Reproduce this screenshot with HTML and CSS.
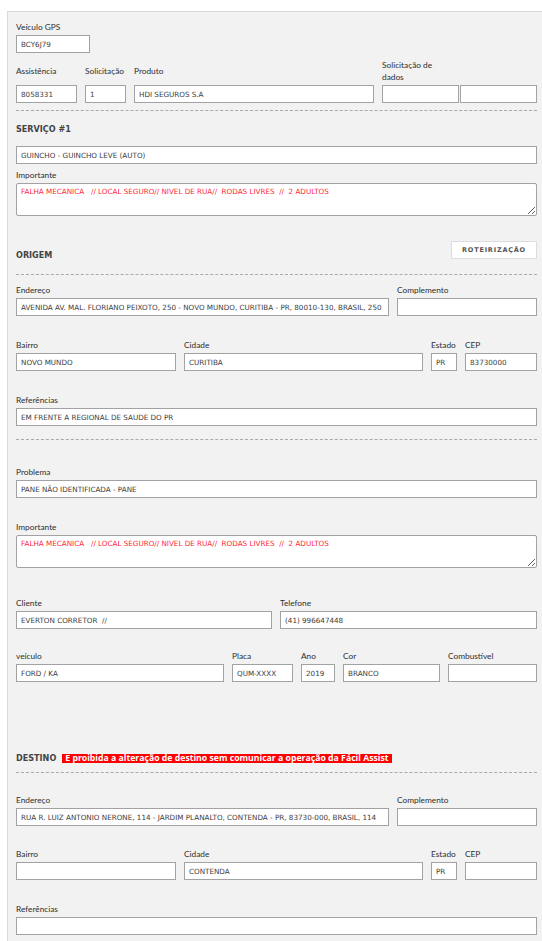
FILE: index.html
```html
<!DOCTYPE html>
<html lang="pt-BR">
<head>
    <meta charset="UTF-8">
    <meta name="viewport" content="width=device-width, initial-scale=1.0">
    <title>Atendimento</title>
    <link rel="stylesheet" href="styles.css">
</head>
<body>
    <div class="panel">
        <div class="row row-gps">
            <div class="field">
                <label>Veículo GPS</label>
                <input type="text" value="BCY6J79">
            </div>
        </div>

        <div class="row row-ids">
            <div class="field">
                <label>Assistência</label>
                <input type="text" value="8058331">
            </div>
            <div class="field">
                <label>Solicitação</label>
                <input type="text" value="1">
            </div>
            <div class="field">
                <label>Produto</label>
                <input type="text" value="HDI SEGUROS S.A">
            </div>
            <div class="field">
                <label class="wrap">Solicitação de dados</label>
                <div class="pair">
                    <input type="text" value="">
                    <input type="text" value="">
                </div>
            </div>
        </div>

        <div class="divider"></div>

        <h3 class="section-title">SERVIÇO #1</h3>
        <input type="text" class="full servico" value="GUINCHO - GUINCHO LEVE (AUTO)">

        <div class="row row-importante">
            <div class="field">
                <label>Importante</label>
                <textarea class="alert-text">FALHA MECANICA   // LOCAL SEGURO// NIVEL DE RUA//  RODAS LIVRES  //  2 ADULTOS</textarea>
            </div>
        </div>

        <div class="section-head origem-head">
            <h3 class="section-title">ORIGEM</h3>
            <button class="btn-route">ROTEIRIZAÇÃO</button>
        </div>

        <div class="divider divider-origem"></div>

        <div class="row row-endereco first">
            <div class="field">
                <label>Endereço</label>
                <input type="text" value="AVENIDA AV. MAL. FLORIANO PEIXOTO, 250 - NOVO MUNDO, CURITIBA - PR, 80010-130, BRASIL, 250">
            </div>
            <div class="field">
                <label>Complemento</label>
                <input type="text" value="">
            </div>
        </div>

        <div class="row row-bairro">
            <div class="field">
                <label>Bairro</label>
                <input type="text" value="NOVO MUNDO">
            </div>
            <div class="field">
                <label>Cidade</label>
                <input type="text" value="CURITIBA">
            </div>
            <div class="field">
                <label>Estado</label>
                <input type="text" value="PR">
            </div>
            <div class="field">
                <label>CEP</label>
                <input type="text" value="83730000">
            </div>
        </div>

        <div class="row">
            <div class="field">
                <label>Referências</label>
                <input type="text" value="EM FRENTE A REGIONAL DE SAUDE DO PR">
            </div>
        </div>

        <div class="divider divider-problema"></div>

        <div class="row row-problema">
            <div class="field">
                <label>Problema</label>
                <input type="text" value="PANE NÃO IDENTIFICADA - PANE">
            </div>
        </div>

        <div class="row">
            <div class="field">
                <label>Importante</label>
                <textarea class="alert-text">FALHA MECANICA   // LOCAL SEGURO// NIVEL DE RUA//  RODAS LIVRES  //  2 ADULTOS</textarea>
            </div>
        </div>

        <div class="row row-cliente">
            <div class="field">
                <label>Cliente</label>
                <input type="text" value="EVERTON CORRETOR  //">
            </div>
            <div class="field">
                <label>Telefone</label>
                <input type="text" value="(41) 996647448">
            </div>
        </div>

        <div class="row row-veiculo">
            <div class="field">
                <label>veículo</label>
                <input type="text" value="FORD / KA">
            </div>
            <div class="field">
                <label>Placa</label>
                <input type="text" value="QUM-XXXX">
            </div>
            <div class="field">
                <label>Ano</label>
                <input type="text" value="2019">
            </div>
            <div class="field">
                <label>Cor</label>
                <input type="text" value="BRANCO">
            </div>
            <div class="field">
                <label>Combustível</label>
                <input type="text" value="">
            </div>
        </div>

        <div class="section-head destino-head">
            <h3 class="section-title">DESTINO</h3>
            <span class="warning">É proibida a alteração de destino sem comunicar a operação da Fácil Assist</span>
        </div>

        <div class="divider divider-destino"></div>

        <div class="row row-endereco destino-first">
            <div class="field">
                <label>Endereço</label>
                <input type="text" value="RUA R. LUIZ ANTONIO NERONE, 114 - JARDIM PLANALTO, CONTENDA - PR, 83730-000, BRASIL, 114">
            </div>
            <div class="field">
                <label>Complemento</label>
                <input type="text" value="">
            </div>
        </div>

        <div class="row row-bairro destino-bairro">
            <div class="field">
                <label>Bairro</label>
                <input type="text" value="">
            </div>
            <div class="field">
                <label>Cidade</label>
                <input type="text" value="CONTENDA">
            </div>
            <div class="field">
                <label>Estado</label>
                <input type="text" value="PR">
            </div>
            <div class="field">
                <label>CEP</label>
                <input type="text" value="">
            </div>
        </div>

        <div class="row">
            <div class="field">
                <label>Referências</label>
                <input type="text" value="">
            </div>
        </div>
    </div>
</body>
</html>
```

FILE: styles.css
```css
body {
    margin: 0;
    padding: 11px 0 0 7px;
    background-color: #ffffff;
    font-family: Lato, 'Open Sans', sans-serif;
    color: #333333;
    overflow: hidden;
}
.panel {
    border-top: 1px solid #dadada;
    border-left: 1px solid #dadada;
    background-color: #f2f2f2;
    padding: 9px 5px 20px 8px;
    min-height: 940px;
}
.row {
    display: grid;
    grid-template-columns: 1fr;
    column-gap: 8px;
    margin-top: 23px;
}
.row-gps {
    grid-template-columns: 74px;
    margin-top: 0;
}
.row-ids {
    grid-template-columns: 61px 41px 240px 155px;
    margin-top: 6px;
}
.row-importante {
    margin-top: 5px;
}
.row-endereco {
    grid-template-columns: 373px 1fr;
}
.row-bairro {
    grid-template-columns: 160px 239px 26px 72px;
}
.row-cliente {
    grid-template-columns: 256px 1fr;
    margin-top: 29px;
}
.row-veiculo {
    grid-template-columns: 208px 61px 34px 97px 1fr;
    margin-top: 21px;
}
.row-problema {
    margin-top: 26px;
}
.first {
    margin-top: 9px;
}
.destino-first {
    margin-top: 21px;
}
.destino-bairro {
    margin-top: 22px;
}
.field {
    display: flex;
    flex-direction: column;
    min-width: 0;
}
.field label {
    flex: 1;
    display: flex;
    align-items: center;
    font-size: 8.3px;
    line-height: 12px;
    margin-bottom: 2px;
    white-space: nowrap;
    color: #2e2e2e;
}
.field label.wrap {
    white-space: normal;
    max-width: 62px;
}
input, textarea {
    box-sizing: border-box;
    width: 100%;
    height: 18px;
    margin: 0;
    padding: 0 4px;
    border: 1px solid #a2a2a2;
    border-radius: 0;
    background-color: #ffffff;
    font-family: 'DejaVu Sans', Verdana, sans-serif;
    font-size: 7.2px;
    color: #3c3c3c;
    outline: none;
}
textarea {
    display: block;
    height: 33px;
    padding: 3px 4px;
    border-radius: 2px;
    resize: vertical;
    line-height: 9px;
}
.alert-text {
    color: #ff1f3d;
}
.pair {
    display: flex;
    gap: 1px;
}
.full {
    display: block;
}
.servico {
    margin-top: 11px;
}
.divider {
    border-top: 1px dashed #a9a9a9;
    margin-top: 7px;
}
.divider-origem {
    margin-top: 15px;
}
.divider-problema {
    margin-top: 13px;
}
.divider-destino {
    margin-top: 8px;
}
.section-title {
    margin: 12px 0 0 0;
    font-family: 'DejaVu Sans', Verdana, sans-serif;
    font-size: 8.1px;
    line-height: 12px;
    font-weight: bold;
    color: #444444;
}
.section-head {
    display: flex;
    align-items: flex-end;
}
.section-head .section-title {
    margin: 0 0 -2px 0;
}
.origem-head {
    justify-content: space-between;
    margin-top: 25px;
}
.btn-route {
    width: 86px;
    height: 18px;
    padding: 0;
    border: 1px solid #dddddd;
    background-color: #ffffff;
    font-family: 'DejaVu Sans', Verdana, sans-serif;
    font-size: 6.5px;
    font-weight: bold;
    letter-spacing: 0.8px;
    color: #555555;
}
.destino-head {
    align-items: center;
    margin-top: 70px;
}
.destino-head .section-title {
    margin: 0;
}
.warning {
    margin-left: 6px;
    padding: 0 3px;
    background-color: #ff0000;
    color: #ffffff;
    font-family: 'Open Sans', sans-serif;
    font-size: 8.7px;
    line-height: 9px;
    font-weight: bold;
}
```
